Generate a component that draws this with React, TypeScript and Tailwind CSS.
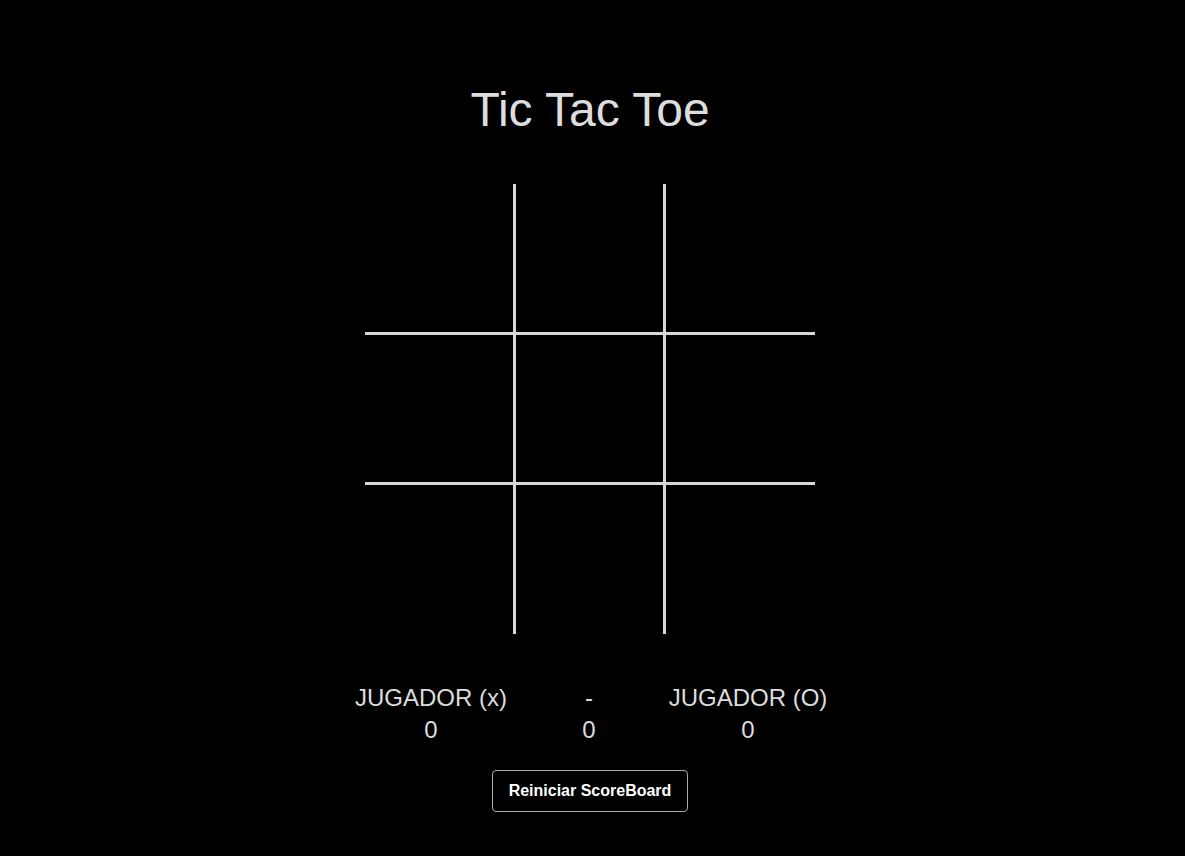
import { useState } from "react"

type Cell = "X" | "O" | null

const cellClass = [
  "border-r-[3px] border-b-[3px]",
  "border-r-[3px] border-b-[3px]",
  "border-b-[3px]",
  "border-r-[3px] border-b-[3px]",
  "border-r-[3px] border-b-[3px]",
  "border-b-[3px]",
  "border-r-[3px]",
  "border-r-[3px]",
  "",
]

export default function App() {
  const [board, setBoard] = useState<Cell[]>(Array(9).fill(null))
  const [turn, setTurn] = useState<"X" | "O">("X")
  const [score, setScore] = useState({ x: 0, draw: 0, o: 0 })

  const play = (i: number) => {
    if (board[i]) return
    const next = [...board]
    next[i] = turn
    setBoard(next)
    setTurn(turn === "X" ? "O" : "X")
  }

  const resetScore = () => {
    setScore({ x: 0, draw: 0, o: 0 })
    setBoard(Array(9).fill(null))
  }

  return (
    <div
      className="min-h-[856px] w-full bg-black text-[#dddddd]"
      style={{ fontFamily: '"Liberation Sans", Arial, sans-serif' }}
    >
      <div className="flex w-[1180px] flex-col items-center pt-[86px]">
        <h1 className="text-[48px] leading-[48px] font-normal">Tic Tac Toe</h1>

        <div className="mt-[50px] grid grid-cols-[151px_150px_149px] grid-rows-[151px_150px_149px]">
          {board.map((c, i) => (
            <button
              key={i}
              onClick={() => play(i)}
              className={`flex items-center justify-center border-[#d8d8d8] text-[64px] text-[#dddddd] ${cellClass[i]}`}
            >
              {c}
            </button>
          ))}
        </div>

        <div className="mt-[48px] grid grid-cols-[158px_158px_160px] text-center text-[24px] leading-8">
          <div>JUGADOR (x)</div>
          <div>-</div>
          <div>JUGADOR (O)</div>
          <div>{score.x}</div>
          <div>{score.draw}</div>
          <div>{score.o}</div>
        </div>

        <button
          onClick={resetScore}
          className="mt-[24px] rounded-[4px] border border-[#a8a8a8] bg-black px-4 py-2 text-base leading-6 font-bold text-white"
        >
          Reiniciar ScoreBoard
        </button>
      </div>
    </div>
  )
}
